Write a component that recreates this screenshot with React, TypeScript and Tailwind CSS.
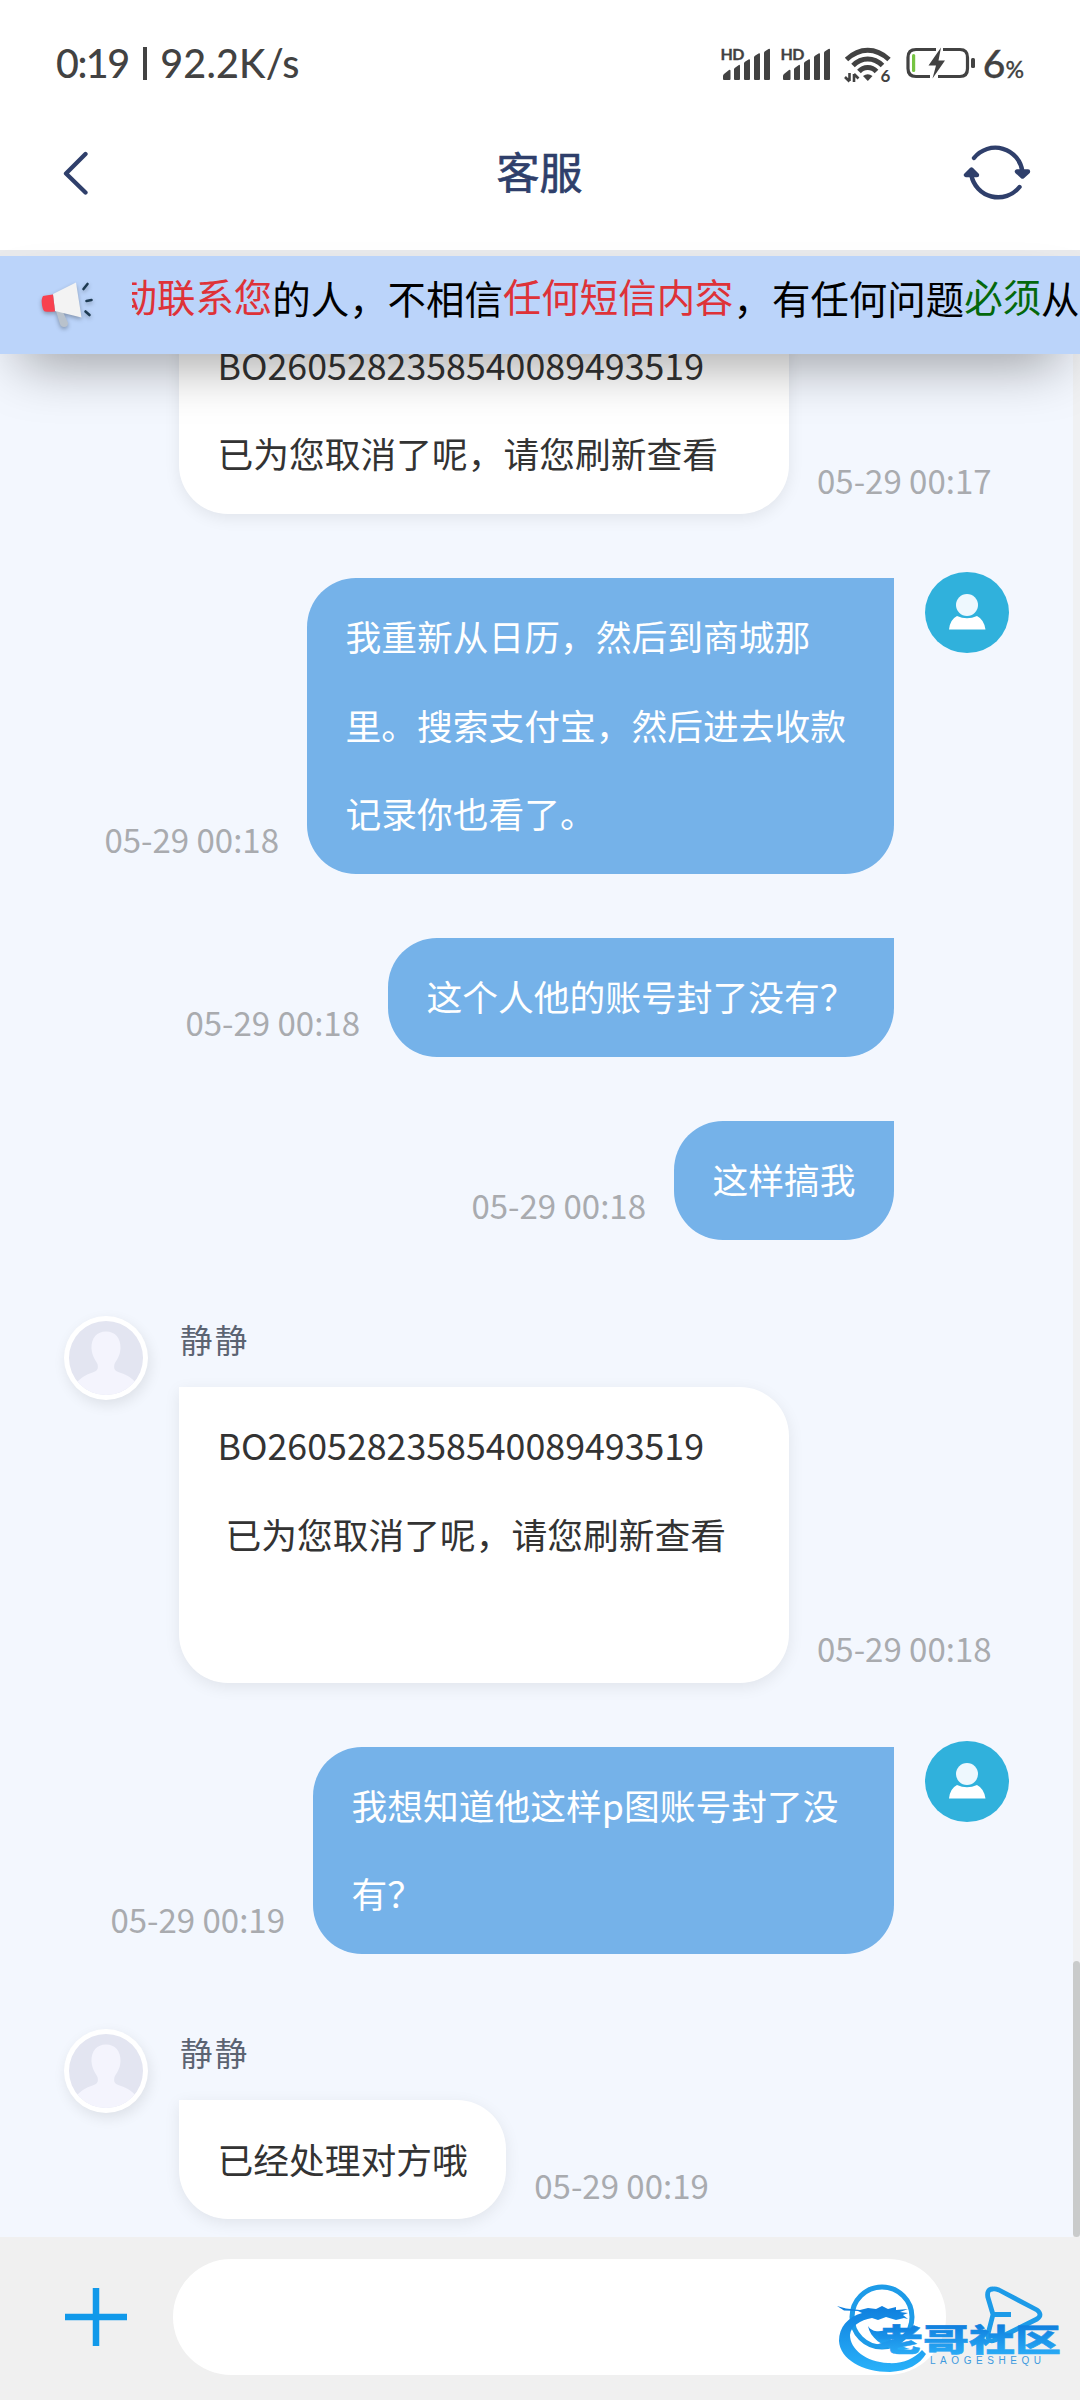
import React from "react";

const SANS = "font-['Noto_Sans_CJK_SC',sans-serif]";

function Signal() {
  return (
    <svg width="52" height="36" viewBox="0 0 52 36" fill="#424242" className="overflow-visible">
      <text x="-0.5" y="14.500" fontSize="16" fontWeight="700" fontFamily="Lato, sans-serif" textLength="24" stroke="#424242" strokeWidth="0.300">HD</text>
      <path d="M2 34v-3q0-1 1-2l5-4q1.500-1 1.500 1v8q0 1-1 1H3q-1 0-1-1zM13 34v-9.500q0-1 1-1.800l3.500-2.500q1.500-1 1.500 .8v13q0 1-1 1h-4q-1 0-1-1zM23 34v-15.500q0-1 1-1.800l3.500-2.200q1.500-1 1.500 .8v18.700q0 1-1 1h-4q-1 0-1-1zM33 34v-21.500q0-1 1-1.700l3.500-2.200q1.500-1 1.500 .7v24.700q0 1-1 1h-4q-1 0-1-1zM43 34v-26q0-1 1-1.700l3.500-2.200q1.500-1 1.500 .7v29.200q0 1-1 1h-4q-1 0-1-1z" />
    </svg>
  );
}

function Wifi() {
  return (
    <svg width="48" height="38" viewBox="0 0 48 38" fill="none" stroke="#424242" strokeWidth="5" className="overflow-visible">
      <path d="M2.500 14.500Q12.500 5.300 23.700 5.300T45 14.500" />
      <path d="M9 20.500Q15.500 14 23.700 14T38.500 20.500" />
      <path d="M15 26.500Q18.500 22.500 23.700 22.500T32.500 26.500" />
      <path d="M19 31q4.700-3.500 9.500 0l-4.700 5z" fill="#424242" stroke="none" />
      <path d="M5.500 28v8M1 32l4.500 4.500M10 37v-8M10 29l4.500 4.500" strokeWidth="2.600" />
      <text x="36.500" y="36.500" fontSize="17" fontWeight="700" fontFamily="Lato, sans-serif" fill="#424242" stroke="none">6</text>
    </svg>
  );
}

function Battery() {
  return (
    <svg width="70" height="36" viewBox="0 0 70 36" fill="none">
      <path d="M31 4.500H11q-8 0-8 8v11q0 8 8 8h14M38 4.500h17q7.500 0 7.500 8v11q0 8-7.500 8H33" stroke="#424242" strokeWidth="3.200" />
      <rect x="7" y="9" width="3.200" height="18" rx="1.600" fill="#76c442" />
      <path d="M36 2.500L23.500 20.500h7.500L27.500 33.500L40 15.500h-6.500z" fill="#424242" />
      <rect x="66" y="13" width="4" height="10" rx="1.500" fill="#424242" />
    </svg>
  );
}

function StatusBar() {
  return (
    <div className="flex h-[96px] items-start justify-between pl-[56px] pr-[56px] pt-[45px] text-[#424242]">
      <div className="flex items-center font-['Lato',sans-serif] text-[39.5px] font-medium leading-[36px]">
        <span className="tracking-[-1.5px]">0:19</span>
        <span className="ml-[14px] mr-[13px] h-[33px] w-[4.5px] bg-[#424242]" />
        <span className="tracking-[0.2px]">92.2K/s</span>
      </div>
      <div className="flex">
        <Signal />
        <span className="w-[8px]" />
        <Signal />
        <span className="w-[11px]" />
        <Wifi />
        <span className="w-[12.500px]" />
        <Battery />
        <span className="ml-[8px] font-['Lato',sans-serif] text-[39px] font-medium leading-[37px] [-webkit-text-stroke:0.3px_#424242]">
          6<span className="text-[23px]">%</span>
        </span>
      </div>
    </div>
  );
}

function Header() {
  return (
    <div className="flex h-[154px] items-center justify-between pl-[62px] pr-[49px]">
      <svg width="54" height="44" viewBox="0 0 54 44" fill="none" stroke="#2f3f6b" strokeWidth="4.300" strokeLinecap="round" strokeLinejoin="round">
        <path d="M23.500 3L4 22.500L23.500 41.500" />
      </svg>
      <h1 className="pb-[6px] text-[43px] font-normal leading-[60px] text-[#2f3f6b] [-webkit-text-stroke:0.7px_#2f3f6b]">客服</h1>
      <svg width="68" height="62" viewBox="0 0 68 62" fill="none" stroke="#2f3f6b" strokeWidth="4.400" strokeLinecap="round" strokeLinejoin="round">
        <path d="M11 16A27.300 27.300 0 0 1 59.500 30" />
        <path d="M56.500 45A27.300 27.300 0 0 1 8.300 33" />
        <path d="M54 29.500h11l-5.500 5zM3 33h11l-5.500-5.500z" fill="#2f3f6b" />
      </svg>
    </div>
  );
}

function Megaphone() {
  return (
    <svg width="54" height="50" viewBox="0 0 54 50" className="drop-shadow-[0_2px_2px_rgba(0,0,0,0.3)]">
      <path d="M16 31l7 1 5 11q0 4-4 4-3 0-4-3z" fill="#b9c2cc" />
      <path d="M13 14L36 2.500L41.500 37.500L15 31z" fill="#f3f3f3" />
      <path d="M3 16q4-1 10-1.500L15 31.500Q9 32 5 31.500q-2-.5-3-6.500T3 16z" fill="#f8414f" />
      <path d="M43.500 9l4-5M46.500 21l5-1M45.500 31.500l4 3.500" stroke="#1d3a52" strokeWidth="2.600" strokeLinecap="round" />
    </svg>
  );
}

function Notice() {
  return (
    <div className="relative z-10 flex h-[98px] items-start bg-[#bbd4fa] pl-[40px] shadow-[0_28px_56px_-20px_rgba(0,0,0,0.4)]">
      <div className="pt-[24px]"><Megaphone /></div>
      <div className="ml-[38px] flex h-[98px] flex-1 overflow-hidden whitespace-nowrap text-[38.45px] leading-[60px] text-black">
        <p className="ml-[-13.500px] pt-[11px]">
          <span className="relative -top-[2px] text-[#de3238]">动联系您</span>的人，不相信
          <span className="relative -top-[2px] text-[#de3238]">任何短信内容</span>，有任何问题
          <span className="relative -top-[2px] text-[#04680c]">必须</span>从
        </p>
      </div>
    </div>
  );
}

function AgentAvatar() {
  return (
    <div className="h-[84px] w-[84px] shrink-0 rounded-full bg-white p-[5px] shadow-[2px_5px_14px_rgba(0,0,0,0.09)]">
      <svg className="h-full w-full rounded-full" viewBox="0 0 74 74" preserveAspectRatio="none">
        <rect width="74" height="74" fill="#e3e5f1" />
        <path d="M37 10.500c9 0 15 6.500 14.500 17-.5 8-4 11.500-6 15.500-1.500 6 1.500 7 5 8.500 8 2.500 13 6 17 11V74H7V62.500c4-5 9-8.500 16.500-11 3.500-1.500 6.500-2.500 5-8.500-2-4-5.500-7.500-6-15.500C22 17 28 10.500 37 10.500z" fill="#f4f4fd" />
      </svg>
    </div>
  );
}

function UserAvatar() {
  return (
    <svg width="84" height="81" viewBox="0 0 84 81" className="ml-[31px] -mt-[6px] shrink-0">
      <ellipse cx="42" cy="40.500" rx="42" ry="40.500" fill="#30b1dc" />
      <circle cx="42" cy="33" r="11" fill="#eef8fe" />
      <path d="M24 57.500q1-10 8-13.500 10 4.500 20 0 7 3.500 8.500 13.500z" fill="#fff" />
    </svg>
  );
}

function Time({ children }: { children: string }) {
  return <span className="mb-[10.5px] self-end text-[33px] leading-[48px] whitespace-nowrap text-[#a9abaf]">{children}</span>;
}

const textStyle = "text-[35.75px] leading-[88.4px] whitespace-pre pt-[14.4px] pb-[16.2px] px-[38.500px]";

function AgentMessage({ name, time, children, box = "" }: { name: string; time: string; children: string; box?: string }) {
  return (
    <div className="flex items-start pl-[64px]">
      <AgentAvatar />
      <div className="ml-[31px]">
        <div className="h-[71px] pl-[1px] text-[32.500px] leading-[46px] tracking-[2.300px] text-[#5c6472]">{name}</div>
        <div className="flex gap-[28px]">
          <div className={`rounded-[49px] rounded-tl-none bg-white text-[#333] shadow-[0_4px_16px_rgba(0,0,0,0.08)] ${textStyle} ${box}`}>{children}</div>
          <Time>{time}</Time>
        </div>
      </div>
    </div>
  );
}

function UserMessage({ time, children, avatar = false, box = "" }: { time: string; children: string; avatar?: boolean; box?: string }) {
  return (
    <div className="flex items-start justify-end pr-[64px]">
      <div className="flex gap-[28px]">
        <Time>{time}</Time>
        <div className={`rounded-[49px] rounded-tr-none bg-[#75b2e9] text-white ${textStyle} ${box}`}>{children}</div>
      </div>
      {avatar ? <UserAvatar /> : <span className="w-[115px]" />}
    </div>
  );
}

function ForumMark() {
  return (
    <svg width="230" height="94" viewBox="0 0 230 94" className="absolute left-[834px] top-[44px] overflow-visible">
      <defs>
        <linearGradient id="mark" x1="0" y1="0" x2="0" y2="1">
          <stop offset="0" stopColor="#0f7fde" />
          <stop offset="1" stopColor="#29b2fa" />
        </linearGradient>
        <linearGradient id="markText" gradientUnits="userSpaceOnUse" x1="0" y1="44" x2="0" y2="73">
          <stop offset="0" stopColor="#0f7fde" />
          <stop offset="1" stopColor="#29aaf5" />
        </linearGradient>
      </defs>
      <circle cx="48" cy="36" r="30" fill="none" stroke="#1d9be8" strokeWidth="5" />
      <path d="M28 32C14 36 5 46 5 60C6 78 28 91 56 91C74 90 86 83 92 73L88 69C80 78 68 83 54 82C32 81 16 68 16 54C17 45 26 39 38 37L44 39L52 36L62 39L70 37L74 38L69 34L74 32L66 31L74 28L62 29L62 26L54 28L48 25L42 28L34 27L26 29L12 27.500L3 25L10 29.500L24 30Z" fill="url(#mark)" />
      <path d="M34 45C38 52 48 51 54 48C50 56 62 64 76 68L64 70C48 65 36 57 34 45Z" fill="url(#mark)" />
      <text x="43" y="70" fontSize="31" fontWeight="900" fontFamily="Noto Sans CJK SC, sans-serif" fill="url(#markText)" stroke="url(#markText)" strokeWidth="0.500" textLength="184" lengthAdjust="spacingAndGlyphs">老哥社区</text>
      <text x="96" y="83" fontSize="10" fontFamily="Liberation Sans, sans-serif" fill="#3d9ade" textLength="111" lengthAdjust="spacing">LAOGESHEQU</text>
    </svg>
  );
}

function Composer() {
  return (
    <div className="relative flex h-[163px] items-start bg-[#f0f0f0] pl-[65px] pt-[22px]">
      <svg width="62" height="58" viewBox="0 0 62 58" className="mt-[29px]" stroke="#1199ea" strokeWidth="6.500">
        <path d="M0 29h62M31 0v58" />
      </svg>
      <div className="ml-[46px] h-[116px] w-[773px] rounded-[58px] bg-white" />
      <svg width="60" height="60" viewBox="0 0 60 60" className="ml-[39px] mt-[27px]" fill="none" stroke="#1d9be8" strokeWidth="4.800" strokeLinejoin="round" strokeLinecap="butt">
        <path d="M8 3Q1.500 3 2.800 11L8 28.500L3 48Q2 57 10 54L52 33Q58 29 52 24L14 4Q10 2.500 8 3zM8 28.500h18" />
      </svg>
      <ForumMark />
    </div>
  );
}

export default function App() {
  return (
    <div className={`flex h-[2400px] w-[1080px] flex-col overflow-hidden bg-white ${SANS}`}>
      <StatusBar />
      <Header />
      <div className="h-[6px] shrink-0 bg-[#e9eaec]" />
      <Notice />
      <div className="flex h-[1883px] overflow-hidden bg-[#f3f7fe]">
        <div className="-mt-[118.4px] flex w-[1073px] shrink-0 flex-col">
          <AgentMessage name="静静" time="05-29 00:17" box="w-[610px]">{"BO2605282358540089493519\n已为您取消了呢，请您刷新查看"}</AgentMessage>
          <div className="h-[64px]" />
          <UserMessage time="05-29 00:18" avatar box="w-[587px]">{"我重新从日历，然后到商城那\n里。搜索支付宝，然后进去收款\n记录你也看了。"}</UserMessage>
          <div className="h-[64px]" />
          <UserMessage time="05-29 00:18">这个人他的账号封了没有？</UserMessage>
          <div className="h-[64px]" />
          <UserMessage time="05-29 00:18">这样搞我</UserMessage>
          <div className="h-[76px]" />
          <AgentMessage name="静静" time="05-29 00:18" box="w-[610px]">{"BO2605282358540089493519\n 已为您取消了呢，请您刷新查看\n "}</AgentMessage>
          <div className="h-[64px]" />
          <UserMessage time="05-29 00:19" avatar box="w-[581px]">{"我想知道他这样p图账号封了没\n有？"}</UserMessage>
          <div className="h-[75.500px]" />
          <AgentMessage name="静静" time="05-29 00:19">已经处理对方哦</AgentMessage>
        </div>
        <div className="flex w-[7px] flex-col justify-end bg-[#f0f1f3]">
          <div className="h-[276px] rounded-[4px] bg-[#c9cbcb]" />
        </div>
      </div>
      <Composer />
    </div>
  );
}
